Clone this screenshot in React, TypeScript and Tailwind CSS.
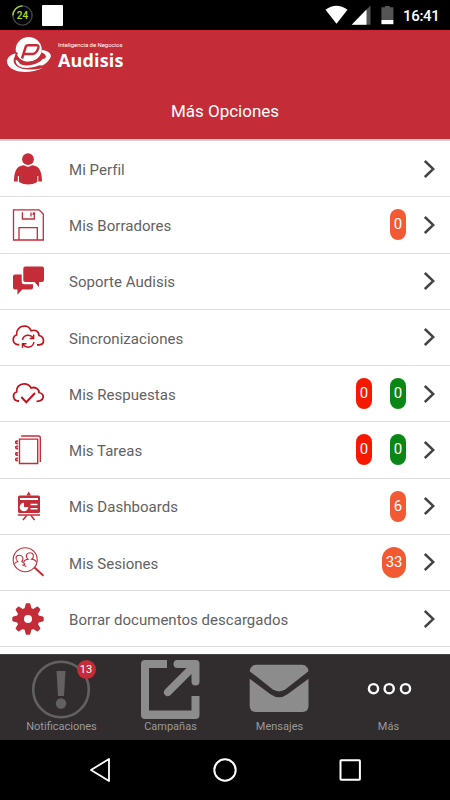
import React from 'react';

type BadgeTone = 'orange' | 'red' | 'green';

interface Badge {
  value: number;
  tone: BadgeTone;
}

interface Option {
  label: string;
  icon: React.ReactNode;
  badges?: Badge[];
}

const toneClass: Record<BadgeTone, string> = {
  orange: 'bg-[#f15a33]',
  red: 'bg-[#f61800]',
  green: 'bg-[#0b8717]',
};

const ProfileIcon = () => (
  <g fill="#c42c38">
    <circle cx="18" cy="8.2" r="5.9" />
    <path d="M10.5 15 Q14 13.6 15 14.7 Q18 17 21 14.7 Q22 13.6 25.5 15 C30 16.5 32 22 32 30.5 H28.3 V25 H27.3 V31 Q18 36 9 31 V25 H7.8 V30.5 H4 C4 22 6 16.5 10.5 15Z" />
  </g>
);

const SaveIcon = () => (
  <g fill="none" stroke="#c42c38" strokeWidth="1.3">
    <path d="M3.5 2.8 H29 L33.3 7 V33 H3.5Z" />
    <path d="M12.4 5.2 V12 H24.3 V5.2 M21 5.5 V9.5 M23.3 5.5 V8" />
    <path d="M9 33 V20.6 H27.3 V33" />
  </g>
);

const ChatIcon = () => (
  <g fill="#c42c38">
    <path d="M15.3 3.6 H32 Q34 3.6 34 5.6 V17 Q34 19 32 19 H29 V24.3 L24.5 19 H15.3 Q13.3 19 13.3 17 V5.6 Q13.3 3.6 15.3 3.6Z" />
    <path d="M5 11.5 H11.7 V19 Q11.7 21.3 14 21.3 H23 V24.5 Q23 26.5 21 26.5 H12.3 L7.4 31.8 V26.5 H5 Q3 26.5 3 24.5 V13.5 Q3 11.5 5 11.5Z" />
  </g>
);

const SyncIcon = () => (
  <g fill="none" stroke="#c1121c" strokeWidth="1.7">
    <path d="M9.3 25.6 H7.5 C2 24.5 2 17.5 6.6 16 C6 11 9.5 7.2 14 7 C17.5 7 20 9 21.2 11.8 C25 10.2 29 12.5 29 16.5 C35 18 34.8 25.5 29.5 25.8 H27" />
    <path d="M12.5 21 C13.5 15.5 20 14.7 23 18.7 M23.6 15.5 V19.4 H19.7 M23.9 23 C23 28.8 16 29.8 13 25.4 M12.5 28.7 V24.8 H16.5" strokeWidth="1.5" />
  </g>
);

const CloudCheckIcon = () => (
  <g fill="none" stroke="#c1121c" strokeWidth="1.8">
    <path d="M9 25 C2.5 25.3 2 17.5 6.6 16 C6 11.3 9.5 7.8 14 7.8 C17.5 7.8 20 9.5 21.2 12 C25 10.5 29 12.8 29 16.5 C35 18 34.8 25 26.5 25.3" />
    <path d="M11.3 21 L16.3 26.3 L25 17" strokeWidth="2" />
  </g>
);

const NotebookIcon = () => (
  <g fill="none" stroke="#c42c38">
    <path d="M9.5 7.1 H27.7 V31.5 H9.5Z" strokeWidth="1.4" />
    <path d="M11.2 4 H28.5 Q30.3 4 30.3 6 V30" strokeWidth="1.4" />
    <path d="M8 9.2 Q5.5 8.8 5.8 10.5 Q6 11.8 8 11.4 M8 14.4 Q5.5 14 5.8 15.7 Q6 17 8 16.6 M8 20.9 Q5.5 20.5 5.8 22.2 Q6 23.5 8 23.1 M8 26.3 Q5.5 25.9 5.8 27.6 Q6 28.9 8 28.5" strokeWidth="1.7" />
  </g>
);

const BoardIcon = () => (
  <>
    <rect x="8" y="7.5" width="22" height="17.5" rx="1.6" fill="#c42c38" />
    <path d="M18.7 3.5 L21 7.5 H16.4Z" fill="#c42c38" />
    <path d="M10 11 H28" stroke="#fff" strokeWidth="2" />
    <path d="M14 14.7 V19 H18.3 A4.3 4.3 0 1 1 14 14.7Z" fill="#fff" />
    <path d="M20.5 16.5 H27.5 M20.5 20.8 H27.5" stroke="#fff" strokeWidth="1.4" />
    <path d="M7.8 27 H30" stroke="#c42c38" strokeWidth="1.5" />
    <path d="M16.5 27.5 L13 32 M21 27.5 L24.6 32" stroke="#c42c38" strokeWidth="1.5" />
  </>
);

const SessionsIcon = () => (
  <g fill="none" stroke="#c42c38" strokeWidth="1.1">
    <circle cx="15.2" cy="15.7" r="12" />
    <path d="M24.5 23.5 L33.5 31.8" strokeWidth="2" />
    <path d="M4.5 19.7 Q5.5 18 7.7 17.7 C4.5 14.5 6 11.2 9.4 11.2 C13 11.2 14 15 11.8 17.5 Q14.3 18.8 14.8 20.2 L13 21 L16.3 22.5" />
    <path d="M13.8 17.8 Q14.5 15.7 18.2 15.3 C14.8 12.5 16.5 8.8 20 8.8 C23.6 8.8 24.8 12.8 21.6 15.3 Q25.3 15.5 26.4 17.8" />
  </g>
);

const GearIcon = () => (
  <g>
    <g fill="#c42c38">
      <circle cx="18" cy="18" r="11.3" />
      {[0, 45, 90, 135, 180, 225, 270, 315].map(a => (
        <path key={a} d="M14.3 8.5 L15.6 3.2 Q15.8 2.3 16.7 2.3 H19.3 Q20.2 2.3 20.4 3.2 L21.7 8.5Z" transform={`rotate(${a} 18 18)`} />
      ))}
    </g>
    <circle cx="18" cy="18" r="4" fill="#fff" />
  </g>
);

const options: Option[] = [
  { label: 'Mi Perfil', icon: <ProfileIcon /> },
  { label: 'Mis Borradores', icon: <SaveIcon />, badges: [{ value: 0, tone: 'orange' }] },
  { label: 'Soporte Audisis', icon: <ChatIcon /> },
  { label: 'Sincronizaciones', icon: <SyncIcon /> },
  { label: 'Mis Respuestas', icon: <CloudCheckIcon />, badges: [{ value: 0, tone: 'red' }, { value: 0, tone: 'green' }] },
  { label: 'Mis Tareas', icon: <NotebookIcon />, badges: [{ value: 0, tone: 'red' }, { value: 0, tone: 'green' }] },
  { label: 'Mis Dashboards', icon: <BoardIcon />, badges: [{ value: 6, tone: 'orange' }] },
  { label: 'Mis Sesiones', icon: <SessionsIcon />, badges: [{ value: 33, tone: 'orange' }] },
  { label: 'Borrar documentos descargados', icon: <GearIcon /> },
];

const StatusBar = () => (
  <div className="h-[30px] shrink-0 bg-black flex items-center pl-3 pr-[10px] text-white">
    <div className="relative w-[21px] h-[21px] flex items-center justify-center">
      <svg className="absolute inset-0" width="21" height="21" viewBox="0 0 21 21" fill="none" strokeWidth="1.4">
        <circle cx="10.5" cy="10.5" r="9.6" stroke="#454545" />
        <path d="M0.9 10.5 A9.6 9.6 0 0 1 10.5 0.9" stroke="#a4d020" />
      </svg>
      <span className="text-[10px] font-medium text-[#b4e023]">24</span>
    </div>
    <div className="w-[21px] h-[21px] ml-[9px] bg-white rounded-[1px]" />
    <svg className="ml-auto" width="70" height="30" viewBox="0 0 70 30">
      <path d="M0.5 9.7 Q11.5 2 22.5 9.7 L11.5 23.7Z" fill="#fff" />
      <path d="M45.5 5.5 V24.8 H26.7Z" fill="#555" />
      <path d="M41.5 9.5 V24.8 H26.7Z" fill="#fff" />
      <path d="M60 6 H64.8 V7.2 H68.4 V20 H56.4 V7.2 H60Z" fill="#555" />
      <path d="M56.4 20 H68.4 V24.2 H56.4Z" fill="#fff" />
    </svg>
    <span className="ml-[8px] mt-[2px] w-[37px] text-[15px] font-medium leading-none tracking-[-0.3px] whitespace-nowrap">16:41</span>
  </div>
);

const Header = () => (
  <header className="h-[109px] shrink-0 bg-[#c42c38] text-white border-t border-[#c8202e]">
    <div className="flex h-[52px] pl-[6px] pt-[5px]">
      <svg width="47" height="38" viewBox="6 36 47 38" fill="none">
        <ellipse cx="28.7" cy="49.5" rx="13" ry="12.5" fill="#fff" />
        <path d="M18 53 C9 54 5 60 8 65 C12 72.5 29 74.5 43 68 C32 70.5 21 70 16.5 66 C12 62 13 57 18 53Z" fill="#fff" />
        <path d="M17 60 C16 69 34 68.5 43 61" stroke="#fff" strokeWidth="2.6" />
        <path d="M17 52.5 C14 58 19 63.3 27 62.8 C35 62.3 41 58.5 42.5 53" stroke="#c42c38" strokeWidth="2" />
        <path d="M41.5 50 C48.5 50.5 53 54.5 50 58.5 C48.5 61 46 63.5 42.5 65.5 L38 65.3 L42.5 59 C47 59 47.5 54.5 41.5 52.5Z" fill="#fff" />
        <path d="M22 58.5 L25.7 46.8 Q26.3 45.2 28 45.2 H36.5 Q39 45.2 38.3 48 Q36.5 54 32.5 54 H24" stroke="#c42c38" strokeWidth="2.5" />
      </svg>
      <div className="ml-[5px] pt-[5px]">
        <div className="text-[6px] leading-[8px] tracking-[-0.05px] whitespace-nowrap">Inteligencia de Negocios</div>
        <div className="mt-px font-['Open_Sans',sans-serif] text-[18px] font-bold leading-[20px] tracking-[0.15px]">Audisis</div>
      </div>
    </div>
    <h1 className="mt-[16px] text-center text-[17px] leading-[24px] font-normal">Más Opciones</h1>
  </header>
);

const OptionRow: React.FC<{ option: Option }> = ({ option }) => (
  <li className="flex h-[56.25px] items-center border-b border-[#dedede] pl-[10px] pr-[15px]">
    <svg className="shrink-0" width="36" height="36" viewBox="0 0 36 36">{option.icon}</svg>
    <span className="ml-[23px] mt-[3px] text-[15px] text-[#626262] tracking-[0.03px] whitespace-nowrap">{option.label}</span>
    <div className="ml-auto flex items-center gap-[18px]">
      {option.badges?.map((b, i) => (
        <span key={i} className={`${toneClass[b.tone]} flex h-[31px] min-w-4 items-center justify-center rounded-full px-[3.5px] text-[15px] leading-none text-white`}>
          {b.value}
        </span>
      ))}
      <svg width="11" height="18" viewBox="0 0 11 18" fill="none" stroke="#444" strokeWidth="2.5">
        <path d="M0.8 1 L9.3 9 L0.8 17" />
      </svg>
    </div>
  </li>
);

const TabBar = () => (
  <nav className="flex h-[86px] shrink-0 border-t border-[#484546] bg-[#312d2e] pl-[6px] pr-[8px] text-[11px] leading-[14px] text-[#9b9999]">
    <div className="flex w-[109px] flex-col items-center pt-[5px]">
      <div className="relative">
        <svg width="60" height="60" viewBox="0 0 60 60" fill="none">
          <circle cx="30" cy="29.5" r="27.8" stroke="#616161" strokeWidth="2.6" />
          <path d="M25.5 11 H34.5 L33 36 H27Z" fill="#616161" />
          <circle cx="30" cy="43.5" r="5.2" fill="#616161" />
        </svg>
        <span className="absolute right-[-5px] top-0 flex h-[19px] w-[19px] items-center justify-center rounded-full bg-[#c42c38] text-[11px] leading-none text-white">13</span>
      </div>
      <span className="pl-[2px]">Notificaciones</span>
    </div>
    <div className="flex w-[109px] flex-col items-center pt-[4px]">
      <svg width="60" height="60" viewBox="0 0 60 60">
        <path d="M27 1 V9 H9 V51.5 H51.5 V37 H59.5 V56 Q59.5 60 55.5 60 H5 Q1 60 1 56 V5 Q1 1 5 1Z" fill="#8c8c8c" />
        <path d="M37.5 1 H56 Q59.5 1 59.5 4.5 V22.5 Q59.5 26.5 55.5 26.5 Q51.5 26.5 51.5 22.5 V15 L30.5 36 Q27.5 38.5 25 36 Q22.5 33.5 25 30.5 L46.5 9 H37.5 Q33.5 9 33.5 5 Q33.5 1 37.5 1Z" fill="#8c8c8c" />
      </svg>
      <span className="mt-px pl-[2px]">Campañas</span>
    </div>
    <div className="flex w-[109px] flex-col items-center pt-[4px]">
      <svg width="60" height="60" viewBox="0 0 60 60" fill="#8c8c8c">
        <path d="M7 5.7 H53 Q59 6.2 59.5 12.2 L36.5 30.3 Q30 34.5 23.5 30.3 L0.7 12.2 Q1.5 6.2 7 5.7Z" />
        <path d="M0.7 19.8 L21.5 35.2 Q30 41.2 38.5 35.2 L59.5 19.8 V46.7 Q59.5 52.9 53.5 52.9 H6.7 Q0.7 52.9 0.7 46.7Z" />
      </svg>
      <span className="mt-px pl-[2px]">Mensajes</span>
    </div>
    <div className="flex w-[109px] flex-col items-center pt-[5px]">
      <svg width="60" height="60" viewBox="0 0 60 60" fill="none" stroke="#fff" strokeWidth="2.4">
        <circle cx="15.5" cy="28.7" r="4.6" />
        <circle cx="31.2" cy="28.7" r="4.6" />
        <circle cx="47.5" cy="28.7" r="4.6" />
      </svg>
      <span className="pl-[2px]">Más</span>
    </div>
  </nav>
);

const SystemNav = () => (
  <div className="flex h-[60px] shrink-0 items-center justify-center gap-[101px] bg-black">
    <svg width="24" height="26" viewBox="0 0 24 26" fill="none" stroke="#fff" strokeWidth="1.8" strokeLinejoin="round">
      <path d="M21 2 V24 L3 13Z" />
    </svg>
    <svg width="24" height="26" viewBox="0 0 24 26" fill="none" stroke="#fff" strokeWidth="2">
      <circle cx="12" cy="13" r="10.7" />
    </svg>
    <svg width="24" height="26" viewBox="0 0 24 26" fill="none" stroke="#fff" strokeWidth="2">
      <rect x="2.5" y="3.3" width="19.4" height="19.4" rx="0.7" />
    </svg>
  </div>
);

export default function App() {
  return (
    <div className="flex h-[800px] w-[450px] flex-col overflow-hidden bg-white font-[Roboto,sans-serif]">
      <StatusBar />
      <Header />
      <ul className="flex-1 border-t-2 border-[#d0d3d3]">
        {options.map(option => <OptionRow key={option.label} option={option} />)}
      </ul>
      <TabBar />
      <SystemNav />
    </div>
  );
}
